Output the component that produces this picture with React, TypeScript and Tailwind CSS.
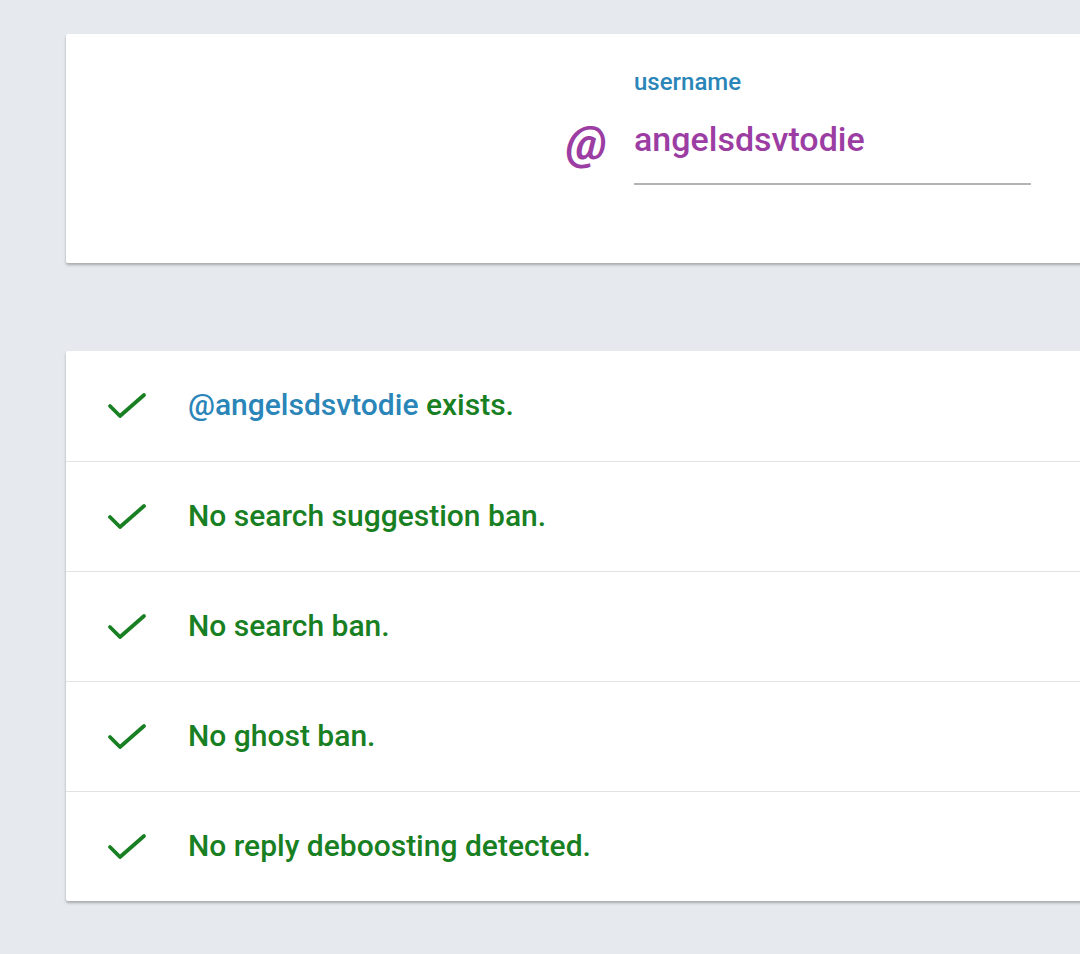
const rows = [
  { at: '@angelsdsvtodie', text: ' exists.' },
  { text: 'No search suggestion ban.' },
  { text: 'No search ban.' },
  { text: 'No ghost ban.' },
  { text: 'No reply deboosting detected.' },
];

function Check() {
  return (
    <svg width="40" height="28" viewBox="0 0 40 28" fill="none">
      <path d="M3 14 L13 24 L37 3" stroke="#188022" strokeWidth="3.8" strokeLinecap="round" strokeLinejoin="round" />
    </svg>
  );
}

export default function App() {
  return (
    <div
      className="w-[1080px] h-[954px] overflow-hidden bg-[#e6eaee] pt-[34px]"
      style={{ fontFamily: 'Roboto, "Noto Sans", sans-serif' }}
    >
      <div className="ml-[66px] w-[1100px] h-[229px] bg-white shadow-[0_2px_3px_rgba(0,0,0,0.28)] rounded-[2px] pl-[500px] pt-[34px]">
        <div className="flex items-start">
          <div className="w-[68px] pt-[51px]">
            <span className="text-[47px] leading-[48px] font-bold italic text-[#9b3da3]">@</span>
          </div>
          <div className="w-[397px]">
            <div className="text-[24px] leading-7 font-medium text-[#2a85b8]">username</div>
            <div className="mt-[23px] pb-[24px] border-b-2 border-[#b4b4b4] text-[34px] leading-[40px] font-medium text-[#9b3da3]">
              angelsdsvtodie
            </div>
          </div>
        </div>
      </div>

      <div className="ml-[66px] mt-[88px] w-[1100px] bg-white shadow-[0_2px_3px_rgba(0,0,0,0.28)] rounded-[2px]">
        {rows.map((r, i) => (
          <div
            key={i}
            className={`flex items-center h-[110px] ${i > 0 ? 'border-t border-[#e2e2e2]' : ''}`}
          >
            <div className="pl-[41px]">
              <Check />
            </div>
            <div className="ml-[41px] pb-[3px] text-[30px] font-medium text-[#188022]">
              {r.at && <span className="text-[#2a85b8]">{r.at}</span>}
              {r.text}
            </div>
          </div>
        ))}
      </div>
    </div>
  );
}
